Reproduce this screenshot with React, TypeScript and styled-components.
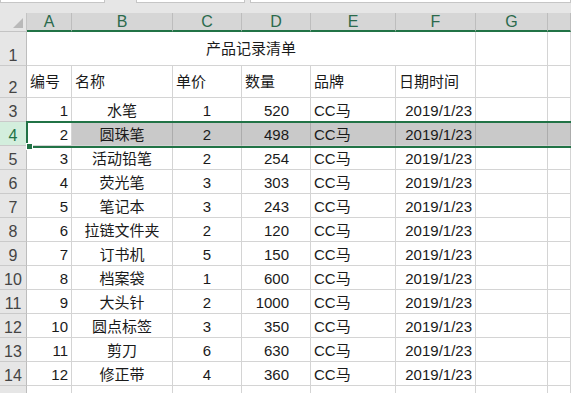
import React from 'react'
import styled, { createGlobalStyle } from 'styled-components'

const GlobalStyle = createGlobalStyle`
    html, body {
        margin: 0;
        padding: 0;
        background: #ffffff;
        overflow: hidden;
    }
    * {
        box-sizing: border-box;
    }
`

const COLS = '27px 45px 101px 69px 69px 85px 80px 72px 1fr'
const GREEN = '#217346'
const GRID = '#d4d4d4'
const FONT = `"Liberation Sans", "Noto Sans CJK SC", sans-serif`

type Align = 'left' | 'center' | 'right'

interface Item {
    no: string
    name: string
    price: string
    qty: string
    brand: string
    date: string
}

const rows: Item[] = [
    { no: '1', name: '水笔', price: '1', qty: '520', brand: 'CC马', date: '2019/1/23' },
    { no: '2', name: '圆珠笔', price: '2', qty: '498', brand: 'CC马', date: '2019/1/23' },
    { no: '3', name: '活动铅笔', price: '2', qty: '254', brand: 'CC马', date: '2019/1/23' },
    { no: '4', name: '荧光笔', price: '3', qty: '303', brand: 'CC马', date: '2019/1/23' },
    { no: '5', name: '笔记本', price: '3', qty: '243', brand: 'CC马', date: '2019/1/23' },
    { no: '6', name: '拉链文件夹', price: '2', qty: '120', brand: 'CC马', date: '2019/1/23' },
    { no: '7', name: '订书机', price: '5', qty: '150', brand: 'CC马', date: '2019/1/23' },
    { no: '8', name: '档案袋', price: '1', qty: '600', brand: 'CC马', date: '2019/1/23' },
    { no: '9', name: '大头针', price: '2', qty: '1000', brand: 'CC马', date: '2019/1/23' },
    { no: '10', name: '圆点标签', price: '3', qty: '350', brand: 'CC马', date: '2019/1/23' },
    { no: '11', name: '剪刀', price: '6', qty: '630', brand: 'CC马', date: '2019/1/23' },
    { no: '12', name: '修正带', price: '4', qty: '360', brand: 'CC马', date: '2019/1/23' },
]

const SELECTED = 1

export default function App() {
    return (
        <Page>
            <GlobalStyle />
            <TopStrip>
                <StripBox $w={105} />
                <StripBox $w={109} $ml={31} />
                <StripBox $ml={5} />
            </TopStrip>

            <HeaderRow>
                <Corner>
                    <CornerTriangle />
                </Corner>
                {['A', 'B', 'C', 'D', 'E', 'F', 'G', ''].map((c, i) => (
                    <ColHead key={i}>{c}</ColHead>
                ))}
            </HeaderRow>

            <Row $h={34}>
                <RowHead>1</RowHead>
                <Cell $span={6} $align="center" $valign="center">产品记录清单</Cell>
                <Cell />
                <Cell />
            </Row>

            <Row $h={32}>
                <RowHead>2</RowHead>
                <Cell $valign="center">编号</Cell>
                <Cell $valign="center">名称</Cell>
                <Cell $valign="center">单价</Cell>
                <Cell $valign="center">数量</Cell>
                <Cell $valign="center">品牌</Cell>
                <Cell $valign="center">日期时间</Cell>
                <Cell />
                <Cell />
            </Row>

            {rows.map((r, i) => {
                const sel = i === SELECTED
                return (
                    <Row key={i} $h={24} $top={sel}>
                        <RowHead $selected={sel}>{i + 3}</RowHead>
                        <Cell $align="right">{r.no}</Cell>
                        <Cell $align="center" $selected={sel}>{r.name}</Cell>
                        <Cell $align="center" $selected={sel}>{r.price}</Cell>
                        <Cell $align="right" $pr={21} $selected={sel}>{r.qty}</Cell>
                        <Cell $selected={sel}>{r.brand}</Cell>
                        <Cell $align="right" $selected={sel}>{r.date}</Cell>
                        <Cell $selected={sel} />
                        <Cell $selected={sel} />
                        {sel && (
                            <Selection>
                                <FillHandle />
                            </Selection>
                        )}
                    </Row>
                )
            })}

            <Row $h={24}>
                <RowHead />
                {Array.from({ length: 8 }).map((_, i) => (
                    <Cell key={i} />
                ))}
            </Row>
        </Page>
    )
}

const Page = styled.div`
    width: 571px;
    height: 393px;
    overflow: hidden;
    display: flex;
    flex-direction: column;
    background: #ffffff;
    font-family: ${FONT};
    font-size: 15px;
    color: #1a1a1a;
`

const TopStrip = styled.div`
    display: flex;
    height: 13px;
    flex-shrink: 0;
    background: #e6e6e6;
`

const StripBox = styled.div<{ $w?: number; $ml?: number }>`
    height: 3px;
    flex: ${p => (p.$w ? `0 0 ${p.$w}px` : '1')};
    margin-left: ${p => p.$ml || 0}px;
    background: #ffffff;
    border: 1px solid #c6c6c6;
    border-top: none;
`

const HeaderRow = styled.div`
    display: grid;
    grid-template-columns: ${COLS};
    height: 19px;
    flex-shrink: 0;
    background: #e6e6e6;
`

const Corner = styled.div`
    position: relative;
    background: #e6e6e6;
    border-right: 1px solid #c4c4c4;
    border-bottom: 1px solid #c4c4c4;
`

const CornerTriangle = styled.div`
    position: absolute;
    right: 3px;
    bottom: 3px;
    width: 0;
    height: 0;
    border-left: 10px solid transparent;
    border-bottom: 10px solid #b9b9b9;
`

const ColHead = styled.div`
    display: flex;
    align-items: flex-end;
    justify-content: center;
    background: #d6d6d6;
    border-right: 1px solid #bdbdbd;
    border-bottom: 2px solid ${GREEN};
    color: #2b6a4c;
    font-size: 16px;
    line-height: 16px;
`

const Row = styled.div<{ $h: number; $top?: boolean }>`
    position: relative;
    z-index: ${p => (p.$top ? 2 : 1)};
    display: grid;
    grid-template-columns: ${COLS};
    height: ${p => p.$h}px;
    flex-shrink: 0;
`

const RowHead = styled.div<{ $selected?: boolean }>`
    display: flex;
    align-items: flex-end;
    justify-content: center;
    padding-bottom: 1px;
    background: ${p => (p.$selected ? '#d3eedd' : '#e6e6e6')};
    color: ${p => (p.$selected ? GREEN : '#444444')};
    border-right: 1px solid #bdbdbd;
    border-bottom: 1px solid #cacaca;
    font-size: 16px;
    line-height: 17px;
`

const Cell = styled.div<{
    $align?: Align
    $valign?: 'center' | 'bottom'
    $span?: number
    $pr?: number
    $selected?: boolean
}>`
    grid-column: ${p => (p.$span ? `span ${p.$span}` : 'auto')};
    display: flex;
    align-items: ${p => (p.$valign === 'center' ? 'center' : 'flex-end')};
    justify-content: ${p =>
        p.$align === 'center' ? 'center' : p.$align === 'right' ? 'flex-end' : 'flex-start'};
    padding: 0 ${p => (p.$pr !== undefined ? p.$pr : 3)}px
        ${p => (p.$valign === 'center' ? 0 : 2)}px 3px;
    background: ${p => (p.$selected ? '#c9c9c9' : '#ffffff')};
    border-right: 1px solid ${p => (p.$selected ? '#acacac' : GRID)};
    border-bottom: 1px solid ${GRID};
    white-space: nowrap;
    overflow: hidden;
    line-height: 17px;
`

const Selection = styled.div`
    position: absolute;
    z-index: 3;
    left: 26px;
    right: -4px;
    top: -1px;
    bottom: -2px;
    border: 2px solid ${GREEN};
    border-right: none;
    pointer-events: none;
`

const FillHandle = styled.div`
    position: absolute;
    left: -2px;
    bottom: -4px;
    width: 7px;
    height: 7px;
    background: ${GREEN};
    border: 1px solid #ffffff;
`
